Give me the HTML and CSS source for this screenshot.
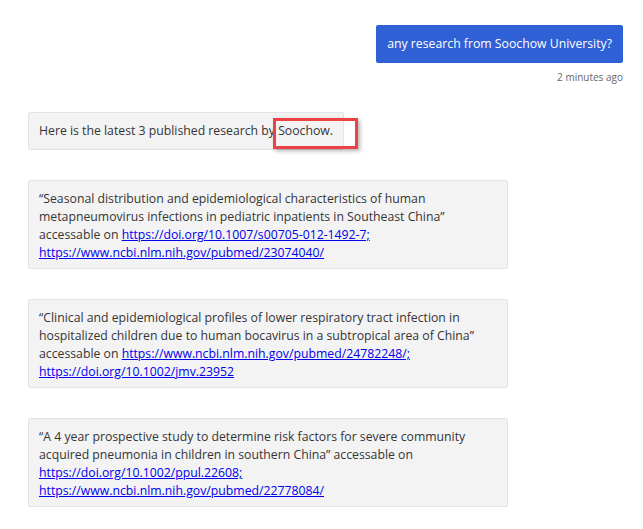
FILE: index.html
```html
<!DOCTYPE html>
<html>
<head>
<meta charset="utf-8">
<link rel="stylesheet" href="styles.css">
</head>
<body>
<div class="chat">
  <div class="user-row">
    <div class="user-bubble">any research from Soochow University?</div>
    <div class="time">2 minutes ago</div>
  </div>
  <div class="bot-row">
    <div class="bot-bubble">Here is the latest 3 published research by Soochow.<span class="highlight"></span></div>
  </div>
  <div class="card">“Seasonal distribution and epidemiological characteristics of human metapneumovirus infections in pediatric inpatients in Southeast China” accessable on <a href="#">https://doi.org/10.1007/s00705-012-1492-7;</a><br><a href="#">https://www.ncbi.nlm.nih.gov/pubmed/23074040/</a></div>
  <div class="card">“Clinical and epidemiological profiles of lower respiratory tract infection in hospitalized children due to human bocavirus in a subtropical area of China” accessable on <a href="#">https://www.ncbi.nlm.nih.gov/pubmed/24782248/;</a><br><a href="#">https://doi.org/10.1002/jmv.23952</a></div>
  <div class="card">“A 4 year prospective study to determine risk factors for severe community acquired pneumonia in children in southern China” accessable on <a href="#">https://doi.org/10.1002/ppul.22608;</a><br><a href="#">https://www.ncbi.nlm.nih.gov/pubmed/22778084/</a></div>
</div>
</body>
</html>
```

FILE: styles.css
```css
html, body {
  margin: 0;
  padding: 0;
  background: #ffffff;
}
body {
  font-family: "Open Sans", "Noto Sans", sans-serif;
  color: #353535;
}
.chat {
  display: flex;
  flex-direction: column;
  padding: 25px 20px 0 28px;
}
.user-row {
  display: flex;
  flex-direction: column;
  align-items: flex-end;
}
.user-bubble {
  background: #2f60d5;
  color: #ffffff;
  font-size: 12.25px;
  line-height: 18px;
  padding: 10px 11px;
  border-radius: 2px;
}
.time {
  margin-top: 7px;
  font-size: 10px;
  line-height: 14px;
  color: #666666;
}
.bot-row {
  display: flex;
  margin-top: 28px;
}
.bot-bubble {
  position: relative;
  background: #f3f3f3;
  border: 1px solid #e3e3e3;
  border-radius: 2px;
  font-size: 12.25px;
  line-height: 18px;
  padding: 9px 10px;
}
.highlight {
  position: absolute;
  left: 244px;
  top: 5px;
  width: 79px;
  height: 25px;
  border: 3px solid #ec4245;
  box-shadow: 2px 2px 4px rgba(0, 0, 0, 0.3);
}
.card {
  width: 458px;
  margin-top: 30px;
  background: #f3f3f3;
  border: 1px solid #e3e3e3;
  border-radius: 2px;
  font-size: 12.25px;
  line-height: 18px;
  padding: 9px 10px 6px 10px;
}
.card a {
  color: #0000ee;
  text-decoration: underline;
}
```
